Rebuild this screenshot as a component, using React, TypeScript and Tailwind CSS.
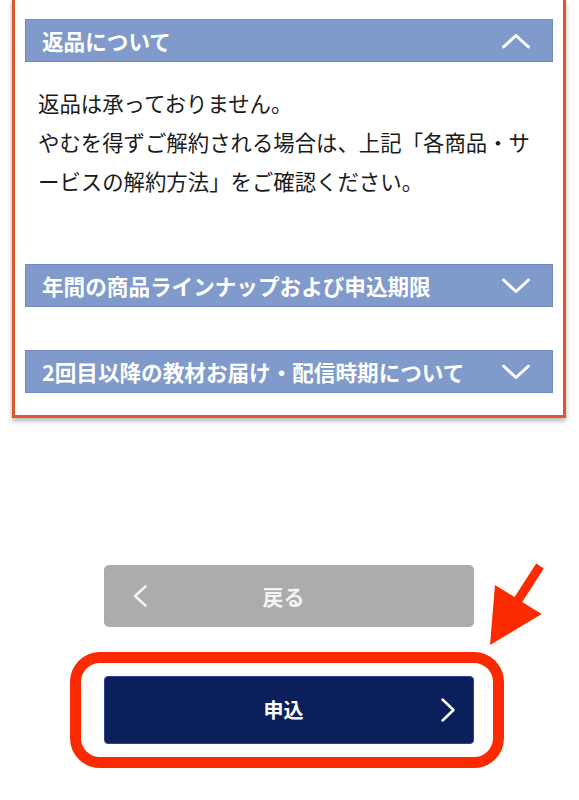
const fontStack = { fontFamily: '"Noto Sans CJK JP", "Noto Sans", sans-serif' };

const ChevronUp = () => (
  <svg width="28" height="16" viewBox="0 0 28 16" fill="none">
    <polyline points="1.5,14 14,2.5 26.5,14" stroke="white" strokeWidth="3" strokeLinecap="round" strokeLinejoin="round" />
  </svg>
);

const ChevronDown = () => (
  <svg width="28" height="16" viewBox="0 0 28 16" fill="none">
    <polyline points="1.5,2 14,13.5 26.5,2" stroke="white" strokeWidth="3" strokeLinecap="round" strokeLinejoin="round" />
  </svg>
);

const SectionHeader = ({ title, open }: { title: string; open?: boolean }) => (
  <div className="flex h-[43px] items-center justify-between border border-[#7189bd] bg-[#7f9acb] pl-[16px] pr-[22px]">
    <span className="text-[21.6px] font-bold leading-none text-white">{title}</span>
    {open ? <ChevronUp /> : <ChevronDown />}
  </div>
);

export default function App() {
  return (
    <div className="relative h-[800px] w-[579px] overflow-hidden bg-white" style={fontStack}>
      {/* 返品 box */}
      <div className="ml-[12px] w-[554px] border-[3px] border-t-0 border-[#d9582c] px-[10px] pb-[22px] pt-[19px] shadow-[0_3px_5px_rgba(0,0,0,0.3)]">
        <SectionHeader title="返品について" open />
        <p className="px-[13px] pt-[21px] text-[21.4px] leading-[39px] text-[#1a1a1a]">
          返品は承っておりません。
          <br />
          やむを得ずご解約される場合は、上記「各商品・サ
          <br />
          ービスの解約方法」をご確認ください。
        </p>
        <div className="mt-[64px]">
          <SectionHeader title="年間の商品ラインナップおよび申込期限" />
        </div>
        <div className="mt-[43px]">
          <SectionHeader title="2回目以降の教材お届け・配信時期について" />
        </div>
      </div>

      {/* Buttons */}
      <button className="ml-[104px] mt-[147px] flex h-[62px] w-[370px] items-center rounded-[5px] bg-[#acacac] pl-[29px] pr-[40px]">
        <svg width="14" height="22" viewBox="0 0 14 22" fill="none">
          <polyline points="12.5,1.5 2,11 12.5,20.5" stroke="#f4f4f4" strokeWidth="2.5" strokeLinecap="round" strokeLinejoin="round" />
        </svg>
        <span className="flex-1 text-center text-[21px] font-bold leading-none text-[#f4f4f4]">戻る</span>
        <span className="w-[14px]" />
      </button>

      <div className="ml-[70px] mt-[25px] w-[434px] rounded-[30px] border-[11px] border-[#fb2a00] py-[13px] pl-[23px] pr-[19px]">
        <button className="flex h-[68px] w-[370px] items-center rounded-[4px] border border-[#2b4390] bg-[#0b1f5b] pl-[21px] pr-[18px]">
          <span className="flex-1 text-center text-[20px] font-bold leading-none text-white">申込</span>
          <svg width="14" height="24" viewBox="0 0 14 24" fill="none">
            <polyline points="1.5,1.5 12.5,12 1.5,22.5" stroke="white" strokeWidth="2.5" strokeLinecap="round" strokeLinejoin="round" />
          </svg>
        </button>
      </div>

      {/* annotation arrow */}
      <svg className="absolute left-[480px] top-[555px]" width="70" height="95" viewBox="480 555 70 95">
        <polygon
          points="536.2,563.6 543.8,568.4 522.2,601.9 541.7,614 490,645 495,585 514.6,597.1"
          fill="#fb2a00"
        />
      </svg>
    </div>
  );
}
